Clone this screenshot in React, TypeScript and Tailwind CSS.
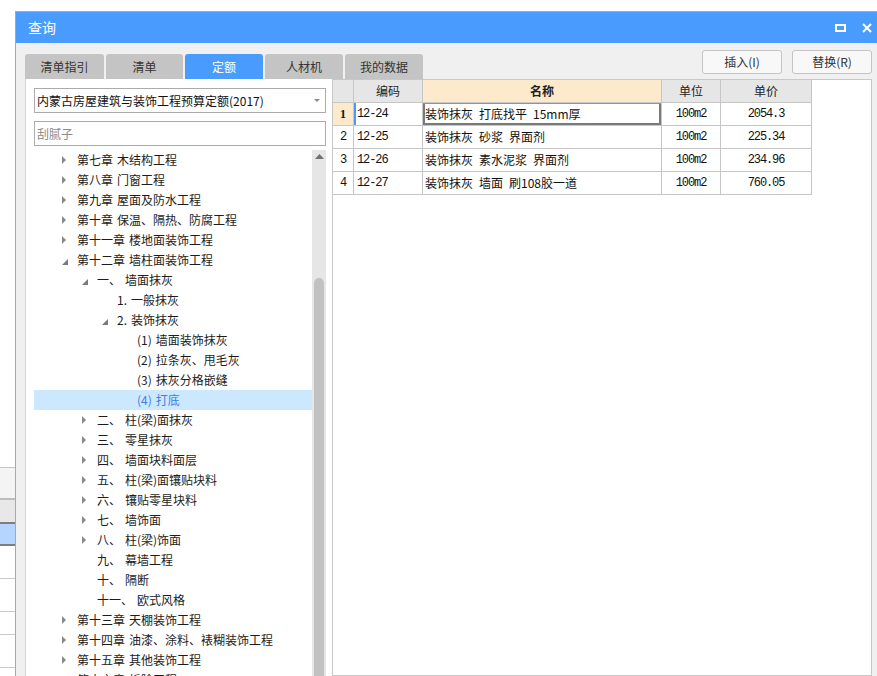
import React from "react";

type Node = {
  level: number;
  label: string;
  arrow?: "c" | "e";
  selected?: boolean;
};

const tree: Node[] = [
  { level: 0, label: "第七章 木结构工程", arrow: "c" },
  { level: 0, label: "第八章 门窗工程", arrow: "c" },
  { level: 0, label: "第九章 屋面及防水工程", arrow: "c" },
  { level: 0, label: "第十章 保温、隔热、防腐工程", arrow: "c" },
  { level: 0, label: "第十一章 楼地面装饰工程", arrow: "c" },
  { level: 0, label: "第十二章 墙柱面装饰工程", arrow: "e" },
  { level: 1, label: "一、 墙面抹灰", arrow: "e" },
  { level: 2, label: "1. 一般抹灰" },
  { level: 2, label: "2. 装饰抹灰", arrow: "e" },
  { level: 3, label: "(1) 墙面装饰抹灰" },
  { level: 3, label: "(2) 拉条灰、甩毛灰" },
  { level: 3, label: "(3) 抹灰分格嵌缝" },
  { level: 3, label: "(4) 打底", selected: true },
  { level: 1, label: "二、 柱(梁)面抹灰", arrow: "c" },
  { level: 1, label: "三、 零星抹灰", arrow: "c" },
  { level: 1, label: "四、 墙面块料面层", arrow: "c" },
  { level: 1, label: "五、 柱(梁)面镶贴块料", arrow: "c" },
  { level: 1, label: "六、 镶贴零星块料", arrow: "c" },
  { level: 1, label: "七、 墙饰面", arrow: "c" },
  { level: 1, label: "八、 柱(梁)饰面", arrow: "c" },
  { level: 1, label: "九、 幕墙工程" },
  { level: 1, label: "十、 隔断" },
  { level: 1, label: "十一、 欧式风格" },
  { level: 0, label: "第十三章 天棚装饰工程", arrow: "c" },
  { level: 0, label: "第十四章 油漆、涂料、裱糊装饰工程", arrow: "c" },
  { level: 0, label: "第十五章 其他装饰工程", arrow: "c" },
  { level: 0, label: "第十六章 拆除工程", arrow: "c" },
];

const indent = ["pl-[27px]", "pl-[47px]", "pl-[67px]", "pl-[87px]"];

const rows = [
  { no: "1", code: "12-24", name: "装饰抹灰 打底找平 15mm厚", unit: "100m2", price: "2054.3" },
  { no: "2", code: "12-25", name: "装饰抹灰 砂浆 界面剂", unit: "100m2", price: "225.34" },
  { no: "3", code: "12-26", name: "装饰抹灰 素水泥浆 界面剂", unit: "100m2", price: "234.96" },
  { no: "4", code: "12-27", name: "装饰抹灰 墙面 刷108胶一道", unit: "100m2", price: "760.05" },
];

const tabs = [
  { label: "清单指引", w: "w-[79px]" },
  { label: "清单", w: "w-[77px]" },
  { label: "定额", w: "w-[78px]", active: true },
  { label: "人材机", w: "w-[78px]" },
  { label: "我的数据", w: "w-[78px]" },
];

// the original UI uses wider spaces than the fallback font gives
const treeSpace = (s: string) => s.replace(/ /g, "\u2004");
const cellSpace = (s: string) => s.replace(/ /g, "\u2002");

function BackgroundStrip() {
  return (
    <div className="w-[15px] shrink-0 flex flex-col">
      <div className="h-[467px] bg-white" />
      <div className="h-[31px] bg-[#f4f4f4] border-t border-[#c4c4c4]" />
      <div className="h-[24px] bg-[#e8e8e8] border-t-2 border-[#bdbdbd]" />
      <div className="h-[24px] bg-[#b5d5fe] border-y-2 border-[#7e7e7e]" />
      <div className="h-[33px] border-b border-[#c8c8c8]" />
      <div className="h-[33px] border-b border-[#c8c8c8]" />
      <div className="h-[23px] border-b border-[#c8c8c8]" />
      <div className="h-[33px] border-b border-[#c8c8c8]" />
      <div className="flex-1" />
    </div>
  );
}

function Arrow({ kind }: { kind?: "c" | "e" }) {
  if (kind === "c") {
    return (
      <svg width="5" height="8" className="ml-[1px]">
        <path d="M0 0 L4 4 L0 8 Z" fill="#8a8a8a" />
      </svg>
    );
  }
  if (kind === "e") {
    return (
      <svg width="6" height="6" className="ml-[1px] mt-[4px]">
        <path d="M6 0 V6 H0 Z" fill="#7a7a7a" />
      </svg>
    );
  }
  return null;
}

function TreePanel() {
  return (
    <div className="flex flex-1 min-h-0 ml-[8px] mt-[4px]">
      <div className="w-[278px] flex flex-col">
        {tree.map((n, i) => (
          <div
            key={i}
            className={`h-[20px] shrink-0 flex items-center text-[12px] whitespace-nowrap ${indent[n.level]} ${
              n.selected ? "bg-[#cce8ff] text-[#3f7fe6]" : "text-[#1c1c1c]"
            }`}
          >
            <span className="w-[16px] h-[20px] flex items-center shrink-0">
              <Arrow kind={n.arrow} />
            </span>
            <span>{treeSpace(n.label)}</span>
          </div>
        ))}
      </div>
      <div className="w-[14px] bg-[#e6e6e6] flex flex-col items-center">
        <svg width="9" height="5" className="mt-[4px]">
          <path d="M0 5 L4.5 0 L9 5 Z" fill="#707070" />
        </svg>
        <div className="h-[119px]" />
        <div className="w-[10px] flex-1 bg-[#c1c1c1] rounded-t-full" />
      </div>
    </div>
  );
}

function LeftColumn() {
  return (
    <div className="w-[307px] shrink-0 flex flex-col pt-[11px]">
      <div className="flex gap-[2px] h-[25px] shrink-0">
        {tabs.map((t) => (
          <div
            key={t.label}
            className={`${t.w} shrink-0 rounded-t-[3px] flex items-center justify-center text-[12px] ${
              t.active ? "bg-[#4a9bfe] text-white" : "bg-[#c4c4c4] text-[#333]"
            }`}
          >
            {t.label}
          </div>
        ))}
      </div>
      <div className="flex-1 min-h-0 bg-white border-l border-[#d4d4d4] flex flex-col">
        <div className="mt-[9px] ml-[8px] w-[292px] h-[25px] border border-[#ababab] flex items-center pl-[2px] pr-[5px] text-[12px] text-[#111]">
          <span className="flex-1 whitespace-nowrap">内蒙古房屋建筑与装饰工程预算定额(2017)</span>
          <svg width="6" height="3">
            <path d="M0 0 H6 L3 3 Z" fill="#8a8a8a" />
          </svg>
        </div>
        <div className="mt-[8px] ml-[8px] w-[292px] h-[25px] border border-[#ababab] flex items-center pl-[2px] text-[12px] text-[#8a8a8a]">
          刮腻子
        </div>
        <TreePanel />
      </div>
    </div>
  );
}

const mono = "font-['Liberation_Mono',monospace] text-[12px] tracking-[-1.1px] text-[#111]";

function DataTable() {
  return (
    <div className="flex flex-col w-[479px]">
      <div className="flex h-[23px] text-[12px] text-[#222]">
        <div className="w-[21px] bg-[#e6e6e6] border-r border-b border-[#c6c6c6]" />
        <div className="w-[69px] bg-[#e6e6e6] border-r border-b border-[#c6c6c6] flex items-center justify-center">编码</div>
        <div className="w-[239px] bg-[#fde9cc] border-r border-b border-[#c6c6c6] flex items-center justify-center font-bold">名称</div>
        <div className="w-[59px] bg-[#e6e6e6] border-r border-b border-[#c6c6c6] flex items-center justify-center">单位</div>
        <div className="w-[91px] bg-[#e6e6e6] border-r border-b border-[#c6c6c6] flex items-center justify-center">单价</div>
      </div>
      {rows.map((r, i) => {
        const first = i === 0;
        return (
          <div key={r.no} className="flex h-[23px]">
            <div
              className={`w-[21px] border-r border-b border-[#c6c6c6] flex items-center justify-center ${
                first ? "bg-[#fde9cc] font-['Liberation_Serif',serif] font-bold text-[12px] text-[#111]" : mono
              }`}
            >
              {r.no}
            </div>
            <div
              className={`w-[69px] border-r border-b border-[#c6c6c6] flex items-center pl-[3px] ${mono} ${
                first ? "shadow-[inset_2px_0_0_#4a9bfe]" : ""
              }`}
            >
              {r.code}
            </div>
            <div
              className={`w-[239px] border-r border-b border-[#c6c6c6] flex items-center pl-[2px] text-[12px] text-[#111] whitespace-nowrap ${
                first
                  ? "shadow-[inset_0_1px_0_#5b9ef0,inset_2px_0_0_#7a7a7a,inset_-2px_0_0_#7a7a7a,inset_0_-2px_0_#7a7a7a]"
                  : ""
              }`}
            >
              {cellSpace(r.name)}
            </div>
            <div className={`w-[59px] border-r border-b border-[#c6c6c6] flex items-center justify-center ${mono}`}>
              {r.unit}
            </div>
            <div className={`w-[91px] border-r border-b border-[#c6c6c6] flex items-center justify-center ${mono}`}>
              {r.price}
            </div>
          </div>
        );
      })}
    </div>
  );
}

function RightColumn() {
  return (
    <div className="w-[540px] shrink-0 flex flex-col pt-[7px]">
      <div className="flex justify-end gap-[10px] h-[24px] shrink-0">
        {["插入(I)", "替换(R)"].map((b) => (
          <div
            key={b}
            className="w-[80px] h-[24px] border border-[#c4c4c4] rounded-[3px] bg-[#f8f8f8] flex items-center justify-center text-[12px] text-[#333]"
          >
            {b}
          </div>
        ))}
      </div>
      <div className="mt-[5px] flex-1 min-h-0 bg-white border border-[#c8c8c8]">
        <DataTable />
      </div>
    </div>
  );
}

export default function App() {
  return (
    <div className="w-[877px] h-[676px] overflow-hidden bg-white flex font-['Noto_Sans_CJK_SC','Noto_Sans',sans-serif]">
      <BackgroundStrip />
      <div className="flex-1 mt-[11px] flex flex-col border-l border-t border-[#a9a9a9] bg-[#f0f0f0] min-w-0">
        <div className="h-[31px] shrink-0 bg-[#4a9bfe] flex items-center pl-[12px] pr-[5px] text-white">
          <span className="text-[14px] flex-1">查询</span>
          <svg width="11" height="8" className="mr-[16px]">
            <rect x="1" y="1" width="9" height="6" fill="none" stroke="white" strokeWidth="2" />
          </svg>
          <svg width="10" height="10">
            <path d="M1 1 L9 9 M9 1 L1 9" stroke="white" strokeWidth="2" />
          </svg>
        </div>
        <div className="flex-1 min-h-0 flex pl-[9px]">
          <LeftColumn />
          <RightColumn />
        </div>
      </div>
    </div>
  );
}
